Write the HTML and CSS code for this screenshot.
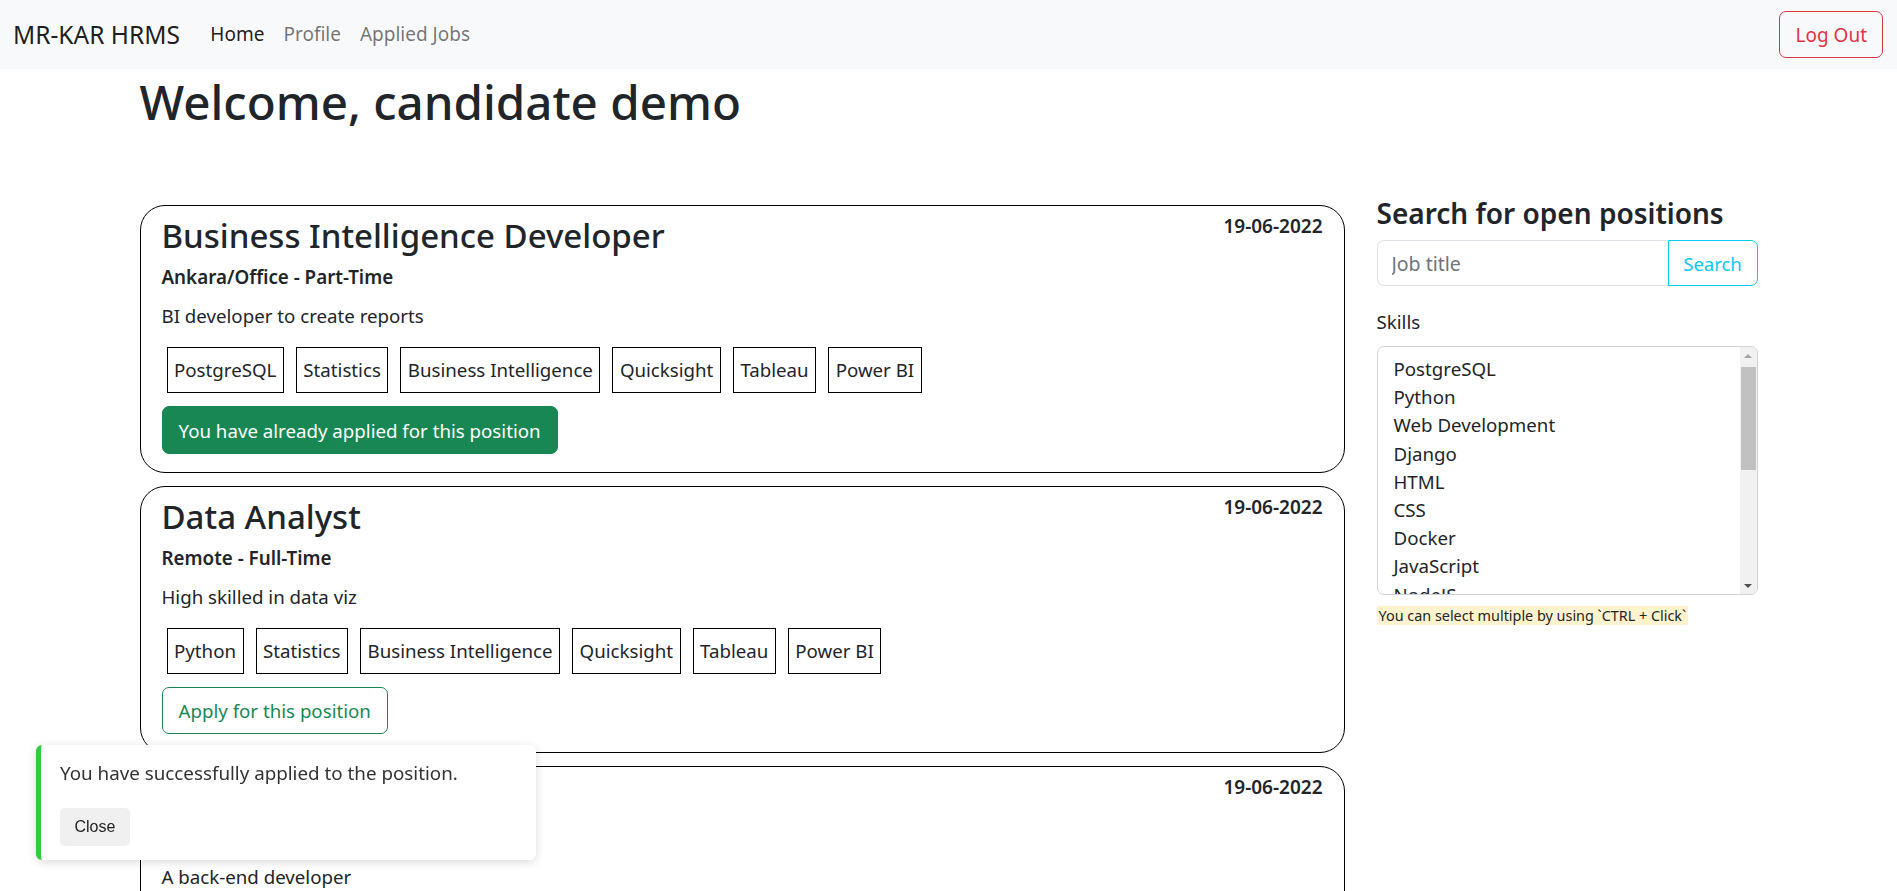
FILE: index.html
```html
<!DOCTYPE html>
<html lang="en">
<head>
<meta charset="utf-8">
<title>MR-KAR HRMS</title>
<link rel="stylesheet" href="styles.css">
</head>
<body>
<nav class="navbar">
  <div class="nav-left">
    <a class="brand" href="#">MR-KAR HRMS</a>
    <a class="nav-link active" href="#">Home</a>
    <a class="nav-link" href="#">Profile</a>
    <a class="nav-link" href="#">Applied Jobs</a>
  </div>
  <button class="btn-logout">Log Out</button>
</nav>

<main class="container">
  <h1 class="welcome">Welcome, candidate demo</h1>
  <div class="row">
    <section class="jobs">
      <article class="card">
        <div class="card-head">
          <h2 class="job-title">Business Intelligence Developer</h2>
          <span class="date">19-06-2022</span>
        </div>
        <p class="meta">Ankara/Office - Part-Time</p>
        <p class="desc">BI developer to create reports</p>
        <div class="tags">
          <span class="tag">PostgreSQL</span>
          <span class="tag">Statistics</span>
          <span class="tag">Business Intelligence</span>
          <span class="tag">Quicksight</span>
          <span class="tag">Tableau</span>
          <span class="tag">Power BI</span>
        </div>
        <button class="btn-applied">You have already applied for this position</button>
      </article>

      <article class="card">
        <div class="card-head">
          <h2 class="job-title">Data Analyst</h2>
          <span class="date">19-06-2022</span>
        </div>
        <p class="meta">Remote - Full-Time</p>
        <p class="desc">High skilled in data viz</p>
        <div class="tags">
          <span class="tag">Python</span>
          <span class="tag">Statistics</span>
          <span class="tag">Business Intelligence</span>
          <span class="tag">Quicksight</span>
          <span class="tag">Tableau</span>
          <span class="tag">Power BI</span>
        </div>
        <button class="btn-apply">Apply for this position</button>
      </article>

      <article class="card">
        <div class="card-head">
          <h2 class="job-title">Back-end Developer</h2>
          <span class="date">19-06-2022</span>
        </div>
        <p class="meta">Remote - Full-Time</p>
        <p class="desc">A back-end developer</p>
        <div class="tags">
          <span class="tag">Python</span>
          <span class="tag">Django</span>
          <span class="tag">PostgreSQL</span>
          <span class="tag">Docker</span>
        </div>
        <button class="btn-apply">Apply for this position</button>
      </article>
    </section>

    <aside class="search">
      <h4 class="search-title">Search for open positions</h4>
      <div class="input-group">
        <input class="search-input" type="text" placeholder="Job title">
        <button class="btn-search">Search</button>
      </div>
      <label class="skills-label">Skills</label>
      <div class="skills-box">
        <div class="skills-list">
          <div class="skill">PostgreSQL</div>
          <div class="skill">Python</div>
          <div class="skill">Web Development</div>
          <div class="skill">Django</div>
          <div class="skill">HTML</div>
          <div class="skill">CSS</div>
          <div class="skill">Docker</div>
          <div class="skill">JavaScript</div>
          <div class="skill">NodeJS</div>
          <div class="skill">React</div>
          <div class="skill">SQL</div>
          <div class="skill">Statistics</div>
        </div>
        <div class="scrollbar">
          <div class="sb-btn"><span class="tri-up"></span></div>
          <div class="sb-track"><div class="sb-thumb"></div></div>
          <div class="sb-btn"><span class="tri-down"></span></div>
        </div>
      </div>
      <div class="help"><span class="help-mark">You can select multiple by using `CTRL + Click`</span></div>
    </aside>
  </div>
</main>

<div class="toast">
  <p class="toast-text">You have successfully applied to the position.</p>
  <button class="btn-close">Close</button>
</div>
</body>
</html>
```

FILE: styles.css
```css
html {
  scrollbar-width: none;
}
* {
  box-sizing: border-box;
}
body {
  margin: 0;
  font-family: "Noto Sans", "Open Sans", sans-serif;
  font-size: 18.7px;
  line-height: 27px;
  color: #212529;
  background: #fff;
}
button {
  font-family: inherit;
  cursor: pointer;
}

/* navbar */
.navbar {
  height: 69px;
  background: #f8f9fa;
  display: flex;
  align-items: center;
  justify-content: space-between;
  padding: 0 14px 0 12px;
}
.nav-left {
  display: flex;
  align-items: center;
}
.brand {
  font-size: 24.5px;
  color: rgba(0, 0, 0, 0.9);
  text-decoration: none;
  margin-right: 21px;
  padding-left: 1px;
}
.nav-link {
  font-size: 19px;
  color: rgba(0, 0, 0, 0.55);
  text-decoration: none;
  padding: 0 9.5px;
}
.nav-link.active {
  color: rgba(0, 0, 0, 0.9);
}
.btn-logout {
  height: 47px;
  padding: 0 15px;
  font-size: 19px;
  color: #dc3545;
  background: transparent;
  border: 1px solid #dc3545;
  border-radius: 7px;
}

/* layout */
.container {
  width: 1618px;
  margin: 0 auto;
}
.welcome {
  margin: 8px 0 0;
  font-size: 47.5px;
  line-height: 50px;
  font-weight: 500;
}
.row {
  display: flex;
  align-items: flex-start;
  gap: 32px;
  margin-top: 69px;
}
.jobs {
  width: 1205px;
  flex: none;
  padding-top: 9px;
}
.search {
  flex: 1;
  min-width: 0;
}

/* cards */
.card {
  border: 1px solid #000;
  border-radius: 25px;
  padding: 8px 21px 18px 21px;
  margin-bottom: 13px;
}
.card-head {
  display: flex;
  justify-content: space-between;
  align-items: flex-start;
}
.job-title {
  margin: 2px 0 0;
  font-size: 33px;
  line-height: 40px;
  font-weight: 500;
}
.date {
  font-weight: 600;
  font-size: 19px;
  line-height: 24px;
}
.meta {
  margin: 8px 0 0;
  font-weight: 600;
  font-size: 18.8px;
}
.desc {
  margin: 11px 0 0;
}
.tags {
  display: flex;
  flex-wrap: wrap;
  gap: 12px;
  margin: 18px 0 0 5px;
}
.tag {
  border: 1px solid #000;
  padding: 9px 6.5px;
  line-height: 26px;
}
.btn-applied {
  display: block;
  margin-top: 13px;
  height: 48px;
  padding: 0 16px;
  font-size: 18.7px;
  color: #fff;
  background: #198754;
  border: 1px solid #198754;
  border-radius: 7px;
}
.btn-apply {
  display: block;
  margin-top: 13px;
  height: 47px;
  padding: 0 16px;
  font-size: 18.7px;
  color: #198754;
  background: #fff;
  border: 1px solid #198754;
  border-radius: 7px;
}

/* search panel */
.search-title {
  margin: 0;
  font-size: 28px;
  line-height: 34px;
  font-weight: 600;
}
.input-group {
  display: flex;
  margin-top: 10px;
  height: 46px;
}
.search-input {
  flex: 1;
  width: 0;
  min-width: 0;
  border: 1px solid #dee2e6;
  border-right: none;
  border-radius: 7px 0 0 7px;
  padding: 0 14px;
  font-family: inherit;
  font-size: 19.5px;
  color: #212529;
  outline: none;
}
.search-input::placeholder {
  color: #6c757d;
}
.btn-search {
  width: 90px;
  flex: none;
  font-size: 18.5px;
  color: #0dcaf0;
  background: #fff;
  border: 1px solid #0dcaf0;
  border-radius: 0 7px 7px 0;
}
.skills-label {
  display: block;
  margin-top: 22px;
}
.skills-box {
  margin-top: 11px;
  height: 249px;
  border: 1px solid #ced4da;
  border-radius: 7px;
  display: flex;
  overflow: hidden;
}
.skills-list {
  flex: 1;
  min-width: 0;
  padding: 8px 0;
  overflow: hidden;
}
.skill {
  padding-left: 16px;
  line-height: 28.2px;
}
.scrollbar {
  width: 17px;
  flex: none;
  background: #f1f1f1;
  display: flex;
  flex-direction: column;
}
.sb-btn {
  height: 17px;
  flex: none;
  display: flex;
  align-items: center;
  justify-content: center;
}
.tri-up {
  width: 0;
  height: 0;
  border-left: 4px solid transparent;
  border-right: 4px solid transparent;
  border-bottom: 4px solid #a3a3a3;
}
.tri-down {
  width: 0;
  height: 0;
  border-left: 4px solid transparent;
  border-right: 4px solid transparent;
  border-top: 4px solid #505050;
}
.sb-track {
  flex: 1;
  padding: 3px 1px 0;
}
.sb-thumb {
  height: 103px;
  background: #c1c1c1;
}
.help {
  margin-top: 9px;
  line-height: 20px;
}
.help-mark {
  background: #fff3cd;
  font-size: 14.4px;
  padding: 0 2px;
}

/* toast */
.toast {
  position: fixed;
  left: 36px;
  bottom: 31px;
  width: 500px;
  background: #fff;
  border-left: 5px solid #2ecc40;
  border-radius: 6px;
  box-shadow: 0 2px 10px rgba(0, 0, 0, 0.15);
  padding: 15px 20px 14px 19px;
}
.toast-text {
  margin: 0;
  color: #333;
  font-size: 18.8px;
}
.btn-close {
  margin-top: 21px;
  height: 38px;
  padding: 0 14.5px;
  font-family: "Liberation Sans", Arial, sans-serif;
  font-size: 16px;
  color: #222;
  background: #f0f0f0;
  border: none;
  border-radius: 5px;
}
```
